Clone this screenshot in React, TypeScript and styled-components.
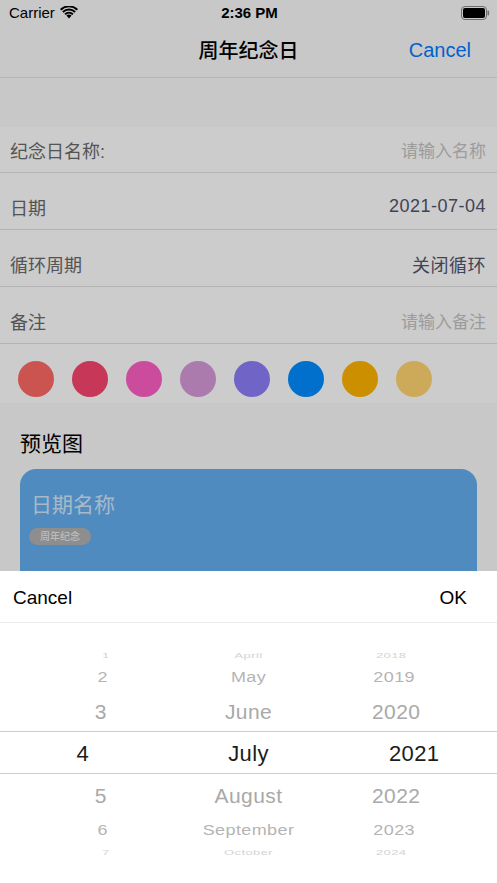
import React from 'react';
import styled, { createGlobalStyle } from 'styled-components';

const GlobalStyle = createGlobalStyle`
  html, body {
    margin: 0;
    padding: 0;
    background: #fafafa;
    font-family: "Liberation Sans", "Noto Sans CJK SC", sans-serif;
    overflow: hidden;
  }
`;

const Page = styled.div`
  width: 497px;
  height: 883px;
  background: #fafafa;
  overflow: hidden;
`;

const TopBar = styled.div`
  background: #fafafa;
  border-bottom: 1px solid #e4e4e4;
`;

const StatusBar = styled.div`
  height: 25px;
  display: flex;
  align-items: center;
  justify-content: space-between;
  padding: 0 7px 0 9px;
  font-size: 15px;
  color: #000;
`;

const StatusLeft = styled.div`
  display: flex;
  align-items: center;
  gap: 5px;
  width: 120px;
`;

const StatusTime = styled.div`
  font-weight: bold;
`;

const StatusRight = styled.div`
  width: 120px;
  display: flex;
  justify-content: flex-end;
`;

const NavBar = styled.div`
  height: 52px;
  display: flex;
  align-items: center;
  justify-content: center;
  position: relative;
`;

const NavTitle = styled.div`
  font-size: 20px;
  font-weight: 500;
  color: #000;
  margin-top: -4px;
`;

const NavAction = styled.div`
  position: absolute;
  right: 26px;
  top: 14px;
  font-size: 20px;
  color: #007aff;
`;

const SectionGap = styled.div`
  height: 49px;
`;

const List = styled.div`
  background: #fff;
`;

const Row = styled.div<{ $first?: boolean }>`
  margin-top: ${(p) => (p.$first ? '0' : '11px')};
  height: 45px;
  border-bottom: 1px solid #e2e2e2;
  display: flex;
  align-items: center;
  justify-content: space-between;
  padding: 0 11px 0 10px;
  font-size: 18px;
`;

const RowLabel = styled.span`
  color: #6a6a6a;
`;

const RowValue = styled.span<{ $placeholder?: boolean }>`
  color: ${(p) => (p.$placeholder ? '#c4c4c4' : '#4f556e')};
  font-size: ${(p) => (p.$placeholder ? '17px' : '18px')};
  letter-spacing: ${(p) => (p.$placeholder ? '0' : '0.5px')};
`;

const Swatches = styled.div`
  display: flex;
  gap: 18px;
  padding: 17px 18px 6px;
  height: 36px;
  background: #fff;
`;

const Swatch = styled.div<{ $color: string }>`
  width: 36px;
  height: 36px;
  border-radius: 50%;
  background: ${(p) => p.$color};
`;

const Preview = styled.div`
  padding: 29px 20px 0;
`;

const PreviewTitle = styled.div`
  font-size: 21px;
  line-height: 24px;
  color: #000;
  margin-bottom: 13px;
`;

const Card = styled.div`
  background: #65aef1;
  border-radius: 16px 16px 0 0;
  height: 200px;
  padding: 20px 12px;
`;

const CardTitle = styled.div`
  font-size: 21px;
  color: rgba(255, 255, 255, 0.72);
  line-height: 32px;
  margin-left: -1px;
`;

const Tag = styled.div`
  display: inline-block;
  margin-top: 7px;
  margin-left: -3px;
  padding: 0 11px;
  height: 17px;
  line-height: 17px;
  border-radius: 9px;
  background: #b2b2b2;
  color: #f4f4f4;
  font-size: 10px;
`;

const Dim = styled.div`
  position: fixed;
  inset: 0;
  background: rgba(0, 0, 0, 0.2);
`;

const Sheet = styled.div`
  position: fixed;
  left: 0;
  right: 0;
  bottom: 0;
  height: 312px;
  background: #fff;
`;

const SheetBar = styled.div`
  height: 52px;
  border-bottom: 1px solid #ececec;
  display: flex;
  align-items: center;
  justify-content: space-between;
  padding: 2px 30px 0 13px;
  box-sizing: border-box;
  font-size: 19px;
  color: #000;
`;

const Wheel = styled.div`
  position: relative;
  display: grid;
  grid-template-columns: 1fr 1fr 1fr;
  padding-top: 24px;
`;

const SelectionBand = styled.div`
  position: absolute;
  left: 0;
  right: 0;
  top: 108px;
  height: 41px;
  border-top: 1px solid #cdcdcd;
  border-bottom: 1px solid #cdcdcd;
`;

const WheelColumn = styled.div`
  display: flex;
  flex-direction: column;
  align-items: center;
`;

const WheelItem = styled.div`
  display: flex;
  align-items: center;
  justify-content: center;
  white-space: nowrap;
  letter-spacing: 0.4px;
`;

// layout for each wheel offset (-3 .. 3)
const slots: Record<number, { h: number; size: number; sy: number; color: string; shift: number }> = {
  [-3]: { h: 16, size: 13, sy: 0.55, color: '#d3d3d3', shift: 23 },
  [-2]: { h: 28, size: 18, sy: 0.85, color: '#b4b4b4', shift: 20 },
  [-1]: { h: 42, size: 21, sy: 0.97, color: '#a9a9a9', shift: 18 },
  0: { h: 42, size: 22, sy: 1, color: '#1c1c1c', shift: 0 },
  1: { h: 42, size: 21, sy: 0.97, color: '#a9a9a9', shift: 18 },
  2: { h: 26, size: 18, sy: 0.8, color: '#b4b4b4', shift: 20 },
  3: { h: 18, size: 13, sy: 0.55, color: '#d3d3d3', shift: 23 },
};

const columns = [
  { items: ['1', '2', '3', '4', '5', '6', '7'], dir: 1 },
  { items: ['April', 'May', 'June', 'July', 'August', 'September', 'October'], dir: 0 },
  { items: ['2018', '2019', '2020', '2021', '2022', '2023', '2024'], dir: -1 },
];

const swatchColors = ['#fe6a65', '#f9456e', '#fe60c3', '#d89ada', '#8d7ef8', '#008dff', '#ffb300', '#ffd571'];

const WifiIcon = () => (
  <svg width="18" height="13" viewBox="0 0 18 13">
    <path d="M9 12.5 L6.4 9.6 A3.8 3.8 0 0 1 11.6 9.6 Z" fill="#000" />
    <path d="M4.4 7.6 A6.6 6.6 0 0 1 13.6 7.6 L12.3 9 A4.8 4.8 0 0 0 5.7 9 Z" fill="#000" />
    <path d="M2.2 5.3 A9.8 9.8 0 0 1 15.8 5.3 L14.5 6.7 A7.9 7.9 0 0 0 3.5 6.7 Z" fill="#000" />
    <path d="M0 3 A13 13 0 0 1 18 3 L16.7 4.4 A11.1 11.1 0 0 0 1.3 4.4 Z" fill="#000" />
  </svg>
);

const BatteryIcon = () => (
  <svg width="29" height="14" viewBox="0 0 29 14">
    <rect x="0.5" y="0.5" width="25" height="13" rx="3.5" fill="none" stroke="#8a8a8a" />
    <rect x="2" y="2" width="22" height="10" rx="2" fill="#000" />
    <rect x="26.5" y="4.5" width="1.6" height="5" rx="0.8" fill="#8a8a8a" />
  </svg>
);

const App: React.FC = () => {
  return (
    <>
      <GlobalStyle />
      <Page>
        <TopBar>
          <StatusBar>
            <StatusLeft>
              Carrier
              <WifiIcon />
            </StatusLeft>
            <StatusTime>2:36 PM</StatusTime>
            <StatusRight>
              <BatteryIcon />
            </StatusRight>
          </StatusBar>
          <NavBar>
            <NavTitle>周年纪念日</NavTitle>
            <NavAction>Cancel</NavAction>
          </NavBar>
        </TopBar>

        <SectionGap />

        <List>
          <Row $first>
            <RowLabel>纪念日名称:</RowLabel>
            <RowValue $placeholder>请输入名称</RowValue>
          </Row>
          <Row>
            <RowLabel>日期</RowLabel>
            <RowValue>2021-07-04</RowValue>
          </Row>
          <Row>
            <RowLabel>循环周期</RowLabel>
            <RowValue>关闭循环</RowValue>
          </Row>
          <Row>
            <RowLabel>备注</RowLabel>
            <RowValue $placeholder>请输入备注</RowValue>
          </Row>
        </List>

        <Swatches>
          {swatchColors.map((c) => (
            <Swatch key={c} $color={c} />
          ))}
        </Swatches>

        <Preview>
          <PreviewTitle>预览图</PreviewTitle>
          <Card>
            <CardTitle>日期名称</CardTitle>
            <Tag>周年纪念</Tag>
          </Card>
        </Preview>
      </Page>

      <Dim />

      <Sheet>
        <SheetBar>
          <span>Cancel</span>
          <span>OK</span>
        </SheetBar>
        <Wheel>
          <SelectionBand />
          {columns.map((col, ci) => (
            <WheelColumn key={ci}>
              {col.items.map((label, i) => {
                const s = slots[i - 3];
                return (
                  <WheelItem
                    key={label}
                    style={{
                      height: s.h,
                      fontSize: s.size,
                      color: s.color,
                      transform: `translateX(${col.dir * s.shift}px) scaleY(${s.sy})`,
                    }}
                  >
                    {label}
                  </WheelItem>
                );
              })}
            </WheelColumn>
          ))}
        </Wheel>
      </Sheet>
    </>
  );
};

export default App;
